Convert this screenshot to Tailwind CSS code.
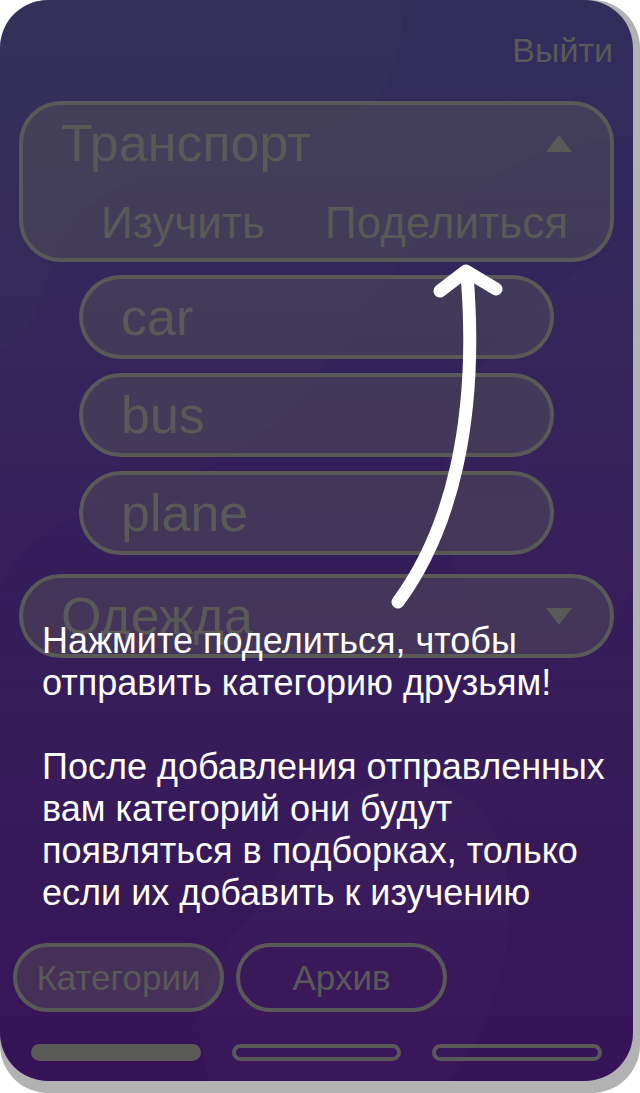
<!DOCTYPE html>
<html lang="ru">
<head>
<meta charset="utf-8">
<meta name="viewport" content="width=device-width, initial-scale=1">
<title>Категории</title>
<script src="https://cdn.jsdelivr.net/npm/@tailwindcss/browser@4"></script>
</head>
<body class="bg-white font-['Liberation_Sans',Arial,sans-serif] text-[#595958]">
<div class="rounded-[48px] bg-[#b2b2b2] pr-[7px] pb-3">
  <main class="relative flex flex-col overflow-hidden rounded-[48px] bg-linear-to-b from-[#312e5b] via-[#36205b] to-[#371358] pb-5">
    <!-- soft background shapes -->
    <svg class="absolute inset-0 h-full w-full" viewBox="0 0 633 1081" preserveAspectRatio="none" aria-hidden="true">
      <defs>
        <linearGradient id="wave" x1="0" y1="0" x2="0" y2="1">
          <stop offset="0" stop-color="#1c0c58" stop-opacity=".08"/>
          <stop offset=".7" stop-color="#1c0c58" stop-opacity=".12"/>
          <stop offset="1" stop-color="#1c0c58" stop-opacity="0"/>
        </linearGradient>
      </defs>
      <path d="M0 0H400C408 50 390 100 345 124C240 160 80 150 50 270C40 320 20 340 0 350Z" fill="#5a6a50" opacity=".06"/>
      <path d="M633 137C520 140 440 200 390 275C330 360 290 430 200 470C100 510 30 520 0 585V720H633V590C600 640 530 690 470 600C430 540 440 440 470 380C510 330 560 270 633 240Z" fill="url(#wave)"/>
      <path d="M210 1081C170 970 250 930 270 890C310 780 420 760 470 800C530 850 520 990 450 1081Z" fill="#ffffff" opacity=".015"/>
    </svg>

    <header class="relative flex justify-end px-5 pt-[27px]">
      <a href="#" class="text-[34px] leading-[46px]">Выйти</a>
    </header>

    <section class="relative flex flex-col px-[19px] pt-7">
      <div class="flex h-[161px] flex-col rounded-[42px] border-4 border-[#595958] bg-[#595958]/40 px-[38px]">
        <button type="button" aria-expanded="true" class="flex items-center justify-between pt-[6px] text-[52px] leading-[64px]">
          <span>Транспорт</span>
          <svg class="h-[17px] w-[26px]" viewBox="0 0 26 17" fill="currentColor" aria-hidden="true"><path d="M13 0L26 17H0Z"/></svg>
        </button>
        <div class="flex justify-between pt-5 pr-1 pl-10 text-[44px] leading-[56px]">
          <button type="button">Изучить</button>
          <button type="button">Поделиться</button>
        </div>
      </div>

      <ul class="flex flex-col gap-[14px] px-[60px] pt-[13px] text-[52px] leading-[76px]">
        <li class="h-[84px] rounded-full border-4 border-[#595958] bg-[#595958]/40 px-[38px]">car</li>
        <li class="h-[84px] rounded-full border-4 border-[#595958] bg-[#595958]/40 px-[38px]">bus</li>
        <li class="h-[84px] rounded-full border-4 border-[#595958] bg-[#595958]/40 px-[38px]">plane</li>
      </ul>

      <button type="button" aria-expanded="false" class="mt-[19px] flex h-[84px] items-center justify-between rounded-full border-4 border-[#595958] bg-[#595958]/40 px-[38px] text-[52px] leading-[76px]">
        <span>Одежда</span>
        <svg class="h-[17px] w-[26px]" viewBox="0 0 26 17" fill="currentColor" aria-hidden="true"><path d="M0 0H26L13 17Z"/></svg>
      </button>
    </section>

    <div class="relative mt-[285px] flex gap-3 px-[13px] text-[35px] leading-[58px]">
      <button type="button" class="h-[69px] w-[211px] rounded-full border-4 border-[#595958] bg-[#595958]/40">Категории</button>
      <button type="button" class="h-[69px] w-[211px] rounded-full border-4 border-[#595958]">Архив</button>
    </div>

    <nav class="relative mt-8 flex gap-[31px] px-[31px]" aria-label="Разделы">
      <button type="button" aria-label="Раздел 1" class="h-[17px] flex-1 rounded-full border-4 border-[#595958] bg-[#595958]"></button>
      <button type="button" aria-label="Раздел 2" class="h-[17px] flex-1 rounded-full border-4 border-[#595958]"></button>
      <button type="button" aria-label="Раздел 3" class="h-[17px] flex-1 rounded-full border-4 border-[#595958]"></button>
    </nav>

    <!-- onboarding hint over the screen -->
    <div class="absolute inset-x-0 top-[264px] text-white" role="note">
      <svg class="mr-[130px] ml-auto h-[346px] w-[113px]" viewBox="390 264 113 346" fill="none" stroke="currentColor" stroke-width="13" stroke-linecap="round" stroke-linejoin="round" aria-hidden="true">
        <path d="M398 602C451 530 479 420 467 275"/>
        <path d="M440 291L466 271L496 289"/>
      </svg>
      <div class="flex flex-col gap-[42px] pt-[10px] pl-[42px] text-[36px] leading-[42px] whitespace-nowrap">
        <p>Нажмите поделиться, чтобы<br>отправить категорию друзьям!</p>
        <p>После добавления отправленных<br>вам категорий они будут<br>появляться в подборках, только<br>если их добавить к изучению</p>
      </div>
    </div>
  </main>
</div>
</body>
</html>
